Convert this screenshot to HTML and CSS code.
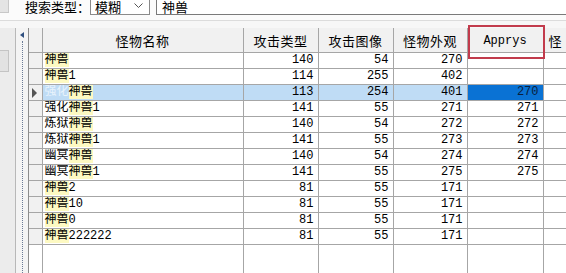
FILE: index.html
```html
<!DOCTYPE html>
<html lang="zh-CN">
<head>
  <meta charset="UTF-8" />
  <title>怪物列表</title>
  <link rel="stylesheet" href="styles.css">
</head>
<body>

  <div class="toolbar">
    <div class="corner-box"></div>
    <span class="search-label">搜索类型：</span>
    <div class="select-box">
      <span>模糊</span>
      <svg class="chevron" width="9" height="6" viewBox="0 0 9 6"><path d="M0.5 0.5 L4.5 4.5 L8.5 0.5" fill="none" stroke="#555" stroke-width="1"/></svg>
    </div>
    <div class="search-input">神兽</div>
  </div>
  <div class="toolbar-sep"></div>

  <div class="main">
    <div class="side">
      <div class="side-btn"></div>
    </div>
    <div class="splitter">
      <span class="split-arrow"></span>
      <span class="split-dots"></span>
    </div>

    <div class="grid">
      <table>
        <colgroup>
          <col class="c-head">
          <col class="c-name">
          <col class="c-num">
          <col class="c-num">
          <col class="c-num2">
          <col class="c-num3">
          <col class="c-rest">
        </colgroup>
        <thead>
          <tr>
            <th></th>
            <th>怪物名称</th>
            <th>攻击类型</th>
            <th>攻击图像</th>
            <th>怪物外观</th>
            <th class="latin">Apprys</th>
            <th class="cut">怪</th>
          </tr>
        </thead>
        <tbody>
          <tr><td class="rh"></td><td class="name"><mark>神兽</mark></td><td>140</td><td>54</td><td>270</td><td></td><td></td></tr>
          <tr><td class="rh"></td><td class="name"><mark>神兽</mark>1</td><td>114</td><td>255</td><td>402</td><td></td><td></td></tr>
          <tr class="selected"><td class="rh"><span class="cur"></span></td><td class="name"><span class="sel-text">强化</span><mark>神兽</mark></td><td>113</td><td>254</td><td>401</td><td class="focus">270</td><td class="plain"></td></tr>
          <tr><td class="rh"></td><td class="name">强化<mark>神兽</mark>1</td><td>141</td><td>55</td><td>271</td><td>271</td><td></td></tr>
          <tr><td class="rh"></td><td class="name">炼狱<mark>神兽</mark></td><td>140</td><td>54</td><td>272</td><td>272</td><td></td></tr>
          <tr><td class="rh"></td><td class="name">炼狱<mark>神兽</mark>1</td><td>141</td><td>55</td><td>273</td><td>273</td><td></td></tr>
          <tr><td class="rh"></td><td class="name">幽冥<mark>神兽</mark></td><td>140</td><td>54</td><td>274</td><td>274</td><td></td></tr>
          <tr><td class="rh"></td><td class="name">幽冥<mark>神兽</mark>1</td><td>141</td><td>55</td><td>275</td><td>275</td><td></td></tr>
          <tr><td class="rh"></td><td class="name"><mark>神兽</mark>2</td><td>81</td><td>55</td><td>171</td><td></td><td></td></tr>
          <tr><td class="rh"></td><td class="name"><mark>神兽</mark>10</td><td>81</td><td>55</td><td>171</td><td></td><td></td></tr>
          <tr><td class="rh"></td><td class="name"><mark>神兽</mark>0</td><td>81</td><td>55</td><td>171</td><td></td><td></td></tr>
          <tr><td class="rh"></td><td class="name"><mark>神兽</mark>222222</td><td>81</td><td>55</td><td>171</td><td></td><td></td></tr>
          <tr class="filler"><td></td><td></td><td></td><td></td><td></td><td></td><td></td></tr>
        </tbody>
      </table>
    </div>

    <div class="mark-box"></div>
  </div>

</body>
</html>
```

FILE: styles.css
```css
html, body {
  margin: 0;
  padding: 0;
  width: 566px;
  height: 273px;
  overflow: hidden;
  background-color: #fafafa;
  font-family: "Liberation Mono", "Noto Sans CJK SC", monospace;
  font-size: 12px;
  color: #000;
}

.toolbar {
  height: 20px;
  display: flex;
  align-items: flex-start;
  background-color: #fbfbfb;
}

.corner-box {
  width: 8px;
  height: 12px;
  background-color: #e4e4e4;
  border-right: 1px solid #c8c8c8;
  border-bottom: 1px solid #c8c8c8;
  margin-right: 16px;
}

.search-label {
  font-family: "Noto Sans CJK SC", sans-serif;
  font-size: 13px;
  line-height: 14px;
  width: 65px;
}

.select-box {
  width: 60px;
  height: 16px;
  margin-top: -1px;
  border: 1px solid #8a8a8a;
  background-color: #fff;
  display: flex;
  align-items: center;
  justify-content: space-between;
  padding: 0 6px 0 4px;
  box-sizing: border-box;
  font-family: "Noto Sans CJK SC", sans-serif;
  font-size: 13px;
  line-height: 14px;
}

.select-box span {
  margin-top: -1px;
}

.chevron {
  margin-top: -2px;
}

.search-input {
  flex: 1;
  margin-left: 6px;
  height: 16px;
  margin-top: -1px;
  border: 1px solid #7a7a7a;
  border-right: none;
  background-color: #fff;
  padding: 0 5px;
  font-family: "Noto Sans CJK SC", sans-serif;
  font-size: 13px;
  line-height: 14px;
  box-sizing: border-box;
}

.toolbar-sep {
  height: 7px;
  border-top: 1px solid #dcdcdc;
  background-color: #f7f7f7;
}

.main {
  display: flex;
  height: 245px;
  position: relative;
}

.side {
  width: 16px;
  background-color: #ececec;
  border-right: 1px solid #b8b8b8;
  box-sizing: border-box;
  padding-top: 22px;
}

.side-btn {
  width: 8px;
  height: 20px;
  border: 1px solid #c4c4c4;
  border-left: none;
  background-color: #e2e2e2;
}

.splitter {
  width: 12px;
  background-color: #f4f4f4;
  display: flex;
  flex-direction: column;
  align-items: center;
  padding-top: 4px;
  box-sizing: border-box;
}

.split-arrow {
  width: 0;
  height: 0;
  border-top: 3px solid transparent;
  border-bottom: 3px solid transparent;
  border-right: 4px solid #2f4f7f;
  margin-bottom: 3px;
}

.split-dots {
  flex: 1;
  width: 0;
  border-left: 1px dotted #6a7a95;
}

.grid {
  flex: 1;
  overflow: hidden;
  background-color: #fff;
  border-left: 1px solid #8c8c8c;
}

table {
  border-collapse: collapse;
  table-layout: fixed;
  width: 580px;
  height: 245px;
}

.c-head { width: 13px; }
.c-name { width: 201px; }
.c-num { width: 75px; }
.c-num2 { width: 74px; }
.c-num3 { width: 76px; }
.c-rest { width: 66px; }

th {
  height: 23px;
  background-color: #f1f1f1;
  border-right: 1px solid #a6a6a6;
  border-bottom: 1px solid #a6a6a6;
  font-family: "Noto Sans CJK SC", sans-serif;
  font-weight: normal;
  font-size: 13px;
  letter-spacing: 0.5px;
  padding: 1px 0 0;
  text-align: center;
  white-space: nowrap;
  overflow: hidden;
}

th.latin {
  font-family: "Liberation Mono", monospace;
  font-size: 12px;
  letter-spacing: 0;
}

th.cut {
  text-align: left;
  padding-left: 5px;
}

td {
  height: 15px;
  padding: 0 4px 0 0;
  border-right: 1px solid #a6a6a6;
  border-bottom: 1px solid #a6a6a6;
  text-align: right;
  line-height: 15px;
  white-space: nowrap;
  overflow: hidden;
}

td.name {
  text-align: left;
  padding: 0 0 0 2px;
}

td.rh {
  background-color: #f1f1f1;
  padding: 0;
}

mark {
  background-color: #fdf9c2;
  color: #000;
}

.selected td {
  background-color: #bfdcf5;
}

.selected td.rh {
  background-color: #f1f1f1;
}

.selected td.focus {
  background-color: #0a72d4;
  color: #0a1f3d;
}

.selected td.plain {
  background-color: #fff;
}

.sel-text {
  color: #e8f3fc;
}

.cur {
  display: block;
  width: 0;
  height: 0;
  margin-left: 3px;
  border-top: 5px solid transparent;
  border-bottom: 5px solid transparent;
  border-left: 5px solid #555;
}

.filler td {
  height: auto;
  border-bottom: none;
  background-color: #fff;
}

.mark-box {
  position: absolute;
  left: 468px;
  top: -3px;
  width: 73px;
  height: 30px;
  border: 2px solid #c23b4c;
}
```
